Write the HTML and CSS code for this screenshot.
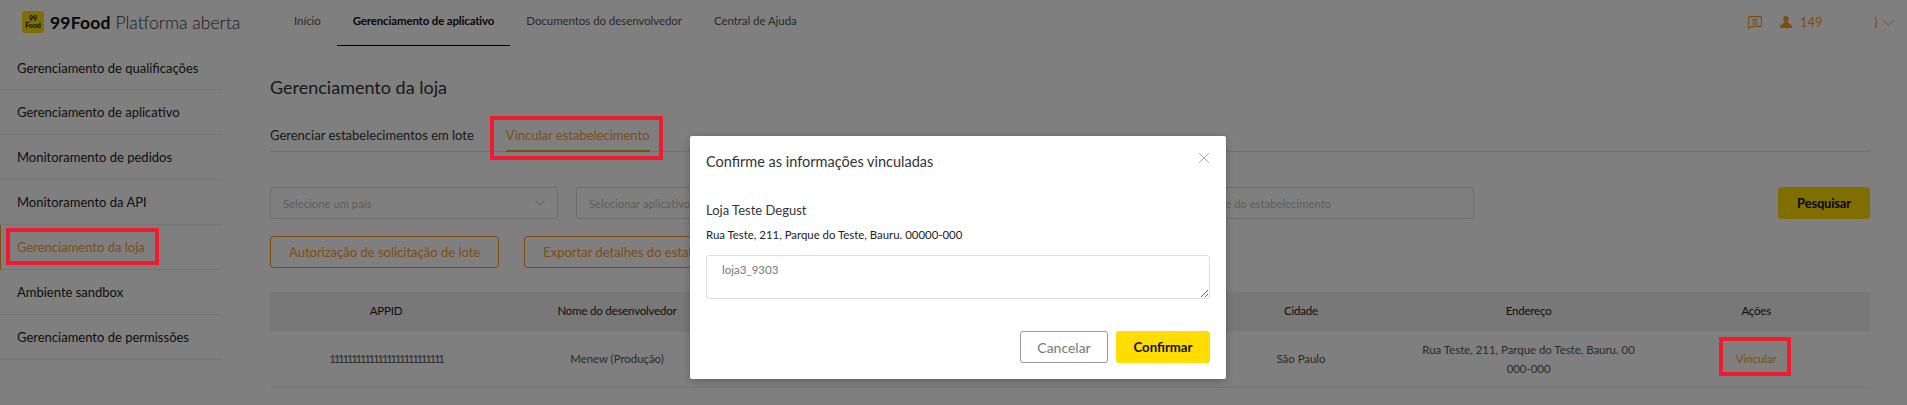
FILE: index.html
```html
<!DOCTYPE html>
<html lang="pt">
<head>
<meta charset="utf-8">
<title>99Food Platforma aberta</title>
<link rel="stylesheet" href="styles.css">
</head>
<body>
<div class="app">
  <header class="topbar">
    <div class="brand">
      <div class="logo"><span>99</span><span>Food</span></div>
      <div class="brand-name"><b>99Food</b> Platforma aberta</div>
    </div>
    <nav class="nav">
      <a class="nav-item">Início</a>
      <a class="nav-item nav-active">Gerenciamento de aplicativo</a>
      <a class="nav-item">Documentos do desenvolvedor</a>
      <a class="nav-item">Central de Ajuda</a>
    </nav>
    <div class="user">
      <svg class="icon-msg" width="14" height="13" viewBox="0 0 14 13" fill="none" stroke="currentColor" stroke-width="1.1"><path d="M1.5.6h11a.9.9 0 0 1 .9.9v8a.9.9 0 0 1-.9.9H4L.6 12.4V1.5A.9.9 0 0 1 1.5.6z"/><path d="M4.3 3.6h5.4M4.3 5.8h5.4M4.3 8h5.4"/></svg>
      <svg class="icon-user" width="12" height="12" viewBox="0 0 12 12" fill="currentColor"><ellipse cx="6" cy="3" rx="2.7" ry="3"/><path d="M4.4 5.600h3.200c.3 1.400 3 2.400 3.800 3.600.3.600.6 1.800.6 2.800H0c0-1 .3-2.200.6-2.800C1.400 8 4.100 7 4.400 5.600z"/></svg>
      <span class="user-id">149</span>
      <span class="user-tail">)</span>
      <svg class="icon-chev" width="11" height="6" viewBox="0 0 11 6" fill="none" stroke="currentColor" stroke-width="1"><path d="M.5.5l5 4.800 5-4.800"/></svg>
    </div>
  </header>
  <div class="body">
    <aside class="sidebar">
      <a class="side-item">Gerenciamento de qualificações</a>
      <a class="side-item">Gerenciamento de aplicativo</a>
      <a class="side-item">Monitoramento de pedidos</a>
      <a class="side-item">Monitoramento da API</a>
      <a class="side-item side-active">Gerenciamento da loja</a>
      <a class="side-item">Ambiente sandbox</a>
      <a class="side-item">Gerenciamento de permissões</a>
    </aside>
    <main class="main">
      <h1 class="title">Gerenciamento da loja</h1>
      <div class="tabs">
        <a class="tab">Gerenciar estabelecimentos em lote</a>
        <a class="tab tab-active">Vincular estabelecimento</a>
      </div>
      <div class="filters">
        <div class="field">Selecione um país
          <svg class="field-chev" width="10" height="6" viewBox="0 0 10 6" fill="none" stroke="currentColor"><path d="M.5.5L5 5 9.500.5"/></svg>
        </div>
        <div class="field">Selecionar aplicativo</div>
        <div class="field">Selecionar cidade</div>
        <div class="field">Nome do estabelecimento</div>
        <button class="btn-search">Pesquisar</button>
      </div>
      <div class="actions">
        <button class="btn-outline">Autorização de solicitação de lote</button>
        <button class="btn-outline">Exportar detalhes do estabelecimento</button>
      </div>
      <table class="table">
        <thead>
          <tr><th class="col-id">APPID</th><th class="col-dev">Nome do desenvolvedor</th><th>Nome da loja</th><th>País</th><th>Cidade</th><th>Endereço</th><th>Ações</th></tr>
        </thead>
        <tbody>
          <tr>
            <td><span class="appid">11111111111111111111111111</span></td>
            <td>Menew (Produção)</td>
            <td>Loja Teste Degust</td>
            <td>Brasil</td>
            <td>São Paulo</td>
            <td>Rua Teste, 211, Parque do Teste, Bauru. 00<br>000-000</td>
            <td><a class="link">Vincular</a></td>
          </tr>
        </tbody>
      </table>
    </main>
  </div>
</div>

<div class="mask"></div>

<section class="modal">
  <h2 class="modal-title">Confirme as informações vinculadas</h2>
  <svg class="modal-close" width="12" height="12" viewBox="0 0 12 12" fill="none" stroke="currentColor" stroke-width="1"><path d="M1 1l10 10M11 1L1 11"/></svg>
  <p class="store-name">Loja Teste Degust</p>
  <p class="store-addr">Rua Teste, 211, Parque do Teste, Bauru. 00000-000</p>
  <textarea class="store-code" readonly>loja3_9303</textarea>
  <div class="modal-foot">
    <button class="btn-cancel">Cancelar</button>
    <button class="btn-confirm">Confirmar</button>
  </div>
</section>

<div class="mark mark-side"></div>
<div class="mark mark-tab"></div>
<div class="mark mark-link"></div>
</body>
</html>
```

FILE: styles.css
```css
* { box-sizing: border-box; }
html, body { margin: 0; height: 405px; overflow: hidden; }
body { background: #fff; color: #222; font-family: Lato, "Open Sans", sans-serif; font-size: 13px; position: relative; }
button { font-family: inherit; padding: 0; cursor: pointer; }
h1, h2, p { margin: 0; font-weight: 400; }

.topbar { display: flex; height: 46px; align-items: stretch; }
.brand { width: 294px; flex: none; display: flex; align-items: flex-start; padding: 11px 0 0 22px; }
.logo { width: 22px; height: 22px; border-radius: 3px; background: #ffdd00; display: flex; flex-direction: column; align-items: center; justify-content: center; font-size: 7px; line-height: 7.500px; font-weight: 900; color: #222; }
.brand-name { margin-left: 6px; font-size: 17.500px; line-height: 24px; font-weight: 300; color: #333; white-space: nowrap; }
.brand-name b { font-weight: 700; color: #111; letter-spacing: .2px; }
.nav { display: flex; flex: 1; }
.nav-item { display: flex; align-items: center; height: 46px; padding-bottom: 4px; margin-right: 32px; font-size: 11.500px; letter-spacing: -.06px; color: #555; white-space: nowrap; border-bottom: 1px solid transparent; }
.nav-active { color: #111; font-weight: 700; letter-spacing: -.16px; margin: 0 16px 0 -16px; padding: 0 16px 4px; border-bottom-color: #000; }
.user { display: flex; align-items: flex-start; padding-top: 16px; color: #ff9a28; font-size: 13px; width: 159px; flex: none; }
.icon-msg { flex: none; }
.icon-user { margin-left: 18px; flex: none; }
.user-id { margin-left: 8px; line-height: 12px; width: 74px; }
.user-tail { line-height: 12px; width: 9px; }
.icon-chev { margin-top: 4px; flex: none; }

.body { display: flex; }
.sidebar { width: 222px; flex: none; }
.side-item { display: flex; align-items: center; height: 45px; padding-left: 17px; border-bottom: 1px solid #e6e6e6; font-size: 13px; color: #222; white-space: nowrap; }
.side-item:first-child { height: 44px; }
.side-active { color: #ff9a28; border-left: 1px solid #ff9a28; padding-left: 16px; }

.main { width: 1648px; padding-left: 48px; }
.title { font-size: 18px; line-height: 24px; margin-top: 29px; color: #333; }
.tabs { display: flex; margin-top: 22px; height: 31px; border-bottom: 1px solid #ddd; }
.tab { display: block; line-height: 28px; font-size: 13px; color: #333; height: 31px; white-space: nowrap; margin-right: 32px; }
.tab-active { color: #ff9a28; border-bottom: 2px solid #ff9a28; }
.filters { display: flex; gap: 18px; margin-top: 35px; }
.field { width: 288px; height: 32px; flex: none; border: 1px solid #d9d9d9; border-radius: 3px; display: flex; align-items: center; justify-content: space-between; padding: 0 12px; font-size: 11.300px; color: #bbb; white-space: nowrap; }
.field:nth-child(4) { width: 286px; }
.field-chev { color: #bbb; }
.btn-search { width: 92px; height: 32px; margin-left: auto; border: 0; border-radius: 3px; background: #ffdd00; color: #111; font-size: 13px; font-weight: 700; letter-spacing: -.2px; }
.actions { display: flex; gap: 25px; margin-top: 17px; }
.btn-outline { height: 32px; padding: 0 18px; background: #fff; border: 1px solid #ff9a28; border-radius: 3px; color: #ff9a28; font-size: 13px; white-space: nowrap; }
.table { width: 1600px; margin-top: 24px; border-collapse: collapse; table-layout: fixed; font-size: 11.400px; }
.table th { height: 38px; background: #f0f0f0; font-weight: 400; color: #222; padding: 0; border-bottom: 1px solid #e6e6e6; font-size: 11.500px; letter-spacing: -.2px; }
.table .col-id { width: 232px; }
.table .col-dev { width: 230px; }
.table td { height: 57px; text-align: center; color: #555; padding: 0; line-height: 19px; border-bottom: 1px solid #e6e6e6; word-break: break-all; }
.appid { letter-spacing: -2.250px; }
.link { color: #ff9a28; }

.mask { position: absolute; inset: 0; background: rgba(0, 0, 0, .5); }
.modal { position: absolute; left: 690px; top: 136px; width: 536px; height: 243px; padding: 16px; background: #fff; border-radius: 2px; box-shadow: 0 2px 8px rgba(0, 0, 0, .25); }
.modal-title { font-size: 14.500px; line-height: 20px; color: #333; }
.modal-close { position: absolute; top: 16px; left: 508px; color: #aaa; }
.store-name { margin-top: 29px; font-size: 13px; line-height: 18px; color: #333; }
.store-addr { margin-top: 8px; font-size: 11.400px; line-height: 16px; color: #222; }
.store-code { display: block; width: 504px; height: 44px; margin-top: 12px; padding: 6px 15px; border: 1px solid #ddd; border-radius: 3px; font-family: inherit; font-size: 11.500px; line-height: 16px; color: #777; outline: 0; }
.modal-foot { display: flex; justify-content: flex-end; gap: 8px; margin-top: 32px; }
.btn-cancel { width: 88px; height: 32px; background: #fff; border: 1px solid #999; border-radius: 3px; color: #777; font-size: 14px; }
.btn-confirm { width: 94px; height: 32px; background: #ffdd00; border: 0; border-radius: 3px; color: #111; font-size: 13.200px; font-weight: 700; }

.mark { position: absolute; border: 4px solid #ee1c2e; }
.mark-side { left: 6px; top: 228px; width: 153px; height: 37px; }
.mark-tab { left: 490px; top: 116px; width: 173px; height: 44px; }
.mark-link { left: 1719px; top: 337px; width: 72px; height: 39px; }
```
